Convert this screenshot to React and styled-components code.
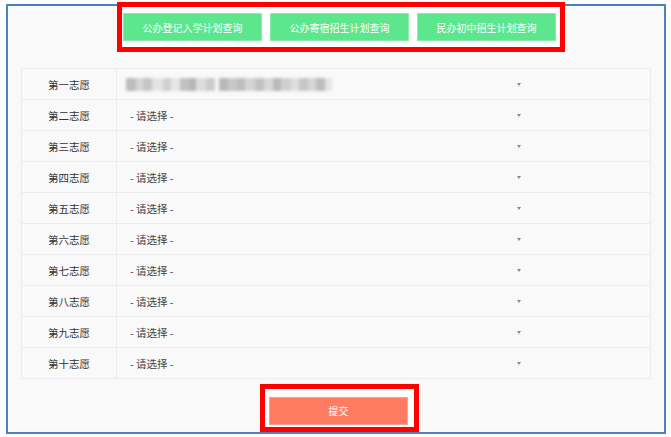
import styled, { createGlobalStyle } from "styled-components";

const GlobalStyle = createGlobalStyle`
  body {
    margin: 0;
    background: #ffffff;
    font-family: "Noto Sans CJK SC", "Noto Sans", sans-serif;
  }
`;

const Frame = styled.div`
  margin: 4px 0 0 6px;
  width: 656px;
  height: 426px;
  border: 2px solid #4f81bd;
  background: #f9f9f9;
  display: flex;
  flex-direction: column;
`;

const Marked = styled.div`
  border: 5px solid #ff0000;
  background: #ffffff;
  box-sizing: border-box;
`;

const TopBar = styled(Marked)`
  align-self: flex-start;
  margin: -4px 0 0 109px;
  padding: 6px 4px 6px 1px;
  display: flex;
  gap: 8px;
  position: relative;
`;

const Button = styled.button`
  width: 139px;
  height: 28px;
  box-sizing: border-box;
  border: 1px solid ${({ $tone }) => ($tone === "coral" ? "#ffa08e" : "#86eeab")};
  background: ${({ $tone }) => ($tone === "coral" ? "#ff7b62" : "#5de68e")};
  color: #ffffff;
  font-family: "Noto Sans CJK SC", sans-serif;
  font-size: 10px;
  padding: 0;
  cursor: pointer;
`;

const Table = styled.div`
  margin: 16px 13px 0;
  border: 1px solid #ececec;
  border-bottom: none;
`;

const Row = styled.div`
  display: grid;
  grid-template-columns: 95px 1fr;
  height: 30px;
  border-bottom: 1px solid #ececec;
`;

const Label = styled.div`
  border-right: 1px solid #ececec;
  display: flex;
  align-items: center;
  justify-content: center;
  font-size: 10.5px;
  color: #333333;
`;

const Cell = styled.div`
  display: flex;
  align-items: center;
`;

const Select = styled.div`
  width: 410px;
  box-sizing: border-box;
  padding: 0 6px 0 13px;
  display: flex;
  align-items: center;
  justify-content: space-between;
  font-size: 10.5px;
  color: #444444;
`;

const Arrow = styled.span`
  width: 0;
  height: 0;
  border-left: 2px solid transparent;
  border-right: 2px solid transparent;
  border-top: 3px solid #8a8a8a;
`;

const Blur = styled.div`
  display: flex;
  gap: ${({ $gap }) => $gap}px;
  filter: blur(${({ $blur }) => $blur}px);
  margin-left: -2px;
`;

const Patch = styled.span`
  display: block;
  height: 13px;
`;

const Footer = styled.div`
  margin-top: 5px;
  display: flex;
  padding-left: 252px;
`;

const SubmitBox = styled(Marked)`
  padding: 7px 6px 3px 4px;
  height: 48px;
`;

const ranks = ["一", "二", "三", "四", "五", "六", "七", "八", "九", "十"];

const blurA = [
  [10, "#bcbcbc"], [7, "#d6d6d6"], [9, "#c6c6c6"], [11, "#e4e4e4"], [8, "#d0d0d0"],
  [9, "#e6e6e6"], [9, "#c2c2c2"], [7, "#b6b6b6"], [10, "#dcdcdc"], [9, "#cccccc"],
];
const blurB = [
  [9, "#b8b8b8"], [9, "#c8c8c8"], [8, "#bdbdbd"], [10, "#d4d4d4"], [9, "#c2c2c2"],
  [9, "#d8d8d8"], [8, "#bababa"], [10, "#d0d0d0"], [8, "#dedede"], [9, "#c6c6c6"],
  [8, "#d6d6d6"], [9, "#bcbcbc"], [7, "#e4e4e4"],
];

const Blurred = () => (
  <Blur $gap={6} $blur={1.6}>
    <Blur $gap={0} $blur={0}>
      {blurA.map(([w, c], i) => (
        <Patch key={i} style={{ width: w, background: c }} />
      ))}
    </Blur>
    <Blur $gap={0} $blur={0}>
      {blurB.map(([w, c], i) => (
        <Patch key={i} style={{ width: w, background: c }} />
      ))}
    </Blur>
  </Blur>
);

export default function App() {
  return (
    <>
      <GlobalStyle />
      <Frame>
        <TopBar>
          <Button>公办登记入学计划查询</Button>
          <Button>公办寄宿招生计划查询</Button>
          <Button>民办初中招生计划查询</Button>
        </TopBar>

        <Table>
          {ranks.map((r, i) => (
            <Row key={r}>
              <Label>第{r}志愿</Label>
              <Cell>
                <Select>
                  {i === 0 ? <Blurred /> : <span>- 请选择 -</span>}
                  <Arrow />
                </Select>
              </Cell>
            </Row>
          ))}
        </Table>

        <Footer>
          <SubmitBox>
            <Button $tone="coral">提交</Button>
          </SubmitBox>
        </Footer>
      </Frame>
    </>
  );
}
